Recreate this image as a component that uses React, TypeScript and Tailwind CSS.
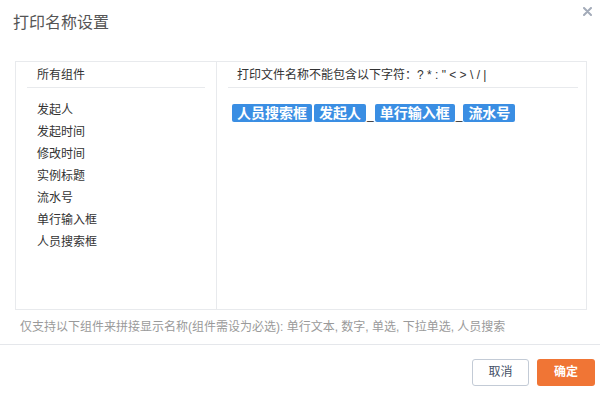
export default function App() {
  const fields = ["发起人", "发起时间", "修改时间", "实例标题", "流水号", "单行输入框", "人员搜索框"];
  const tags = ["人员搜索框", "发起人", "_", "单行输入框", "_", "流水号"];

  return (
    <div
      className="relative w-[600px] h-[399px] bg-white overflow-hidden"
      style={{ fontFamily: '"Liberation Sans", "Noto Sans CJK SC", sans-serif' }}
    >
      {/* CLOSE */}
      <button className="absolute right-[6px] top-[4px] w-[14px] h-[14px] flex items-center justify-center">
        <svg width="9" height="9" viewBox="0 0 9 9">
          <path d="M1 1 L8 8 M8 1 L1 8" stroke="#a3abb9" strokeWidth="2" strokeLinecap="round" />
        </svg>
      </button>

      {/* TITLE */}
      <div className="h-[46px] flex items-center px-[13px] text-[16px] text-[#555]">打印名称设置</div>

      {/* BOX */}
      <div className="mt-[15px] mx-[15px] w-[572px] h-[249px] border border-[#e8eaed] flex">
        <div className="w-[201px] border-r border-[#e8eaed]">
          <div className="mx-[11px] h-[26px] flex items-center pl-[10px] border-b border-[#e8eaed] text-[12px] text-[#333]">
            所有组件
          </div>
          <div className="pt-[11px] pl-[21px]">
            {fields.map((f) => (
              <div key={f} className="h-[22px] flex items-center text-[12px] text-[#333]">
                {f}
              </div>
            ))}
          </div>
        </div>
        <div className="flex-1">
          <div className="ml-[11px] mr-[8px] h-[26px] flex items-center pl-[9px] border-b border-[#e8eaed] text-[12px] text-[#333]">
            打印文件名称不能包含以下字符：? * : " &lt; &gt; \ / |
          </div>
          <div className="mt-[16px] ml-[15px] flex items-end gap-[2px]">
            {tags.map((t, i) =>
              t === "_" ? (
                <span key={i} className="mx-[-1px] text-[12px] leading-[14px] text-[#333]">_</span>
              ) : (
                <span
                  key={i}
                  className="h-[18px] px-[5px] flex items-center rounded-[2px] bg-[#3a8ee3] text-white text-[14px] font-bold"
                >
                  {t}
                </span>
              )
            )}
          </div>
        </div>
      </div>

      {/* NOTE */}
      <div className="h-[34px] flex items-center pl-[20px] text-[12px] text-[#9a9a9a]">
        仅支持以下组件来拼接显示名称(组件需设为必选): 单行文本, 数字, 单选, 下拉单选, 人员搜索
      </div>

      {/* FOOTER */}
      <div className="border-t border-[#e5e7eb] h-[55px] flex items-center justify-end gap-[8px] pr-[5px]">
        <button className="w-[57px] h-[27px] rounded-[3px] border border-[#c3cbd6] bg-white text-[12px] text-[#445066]">
          取消
        </button>
        <button className="w-[58px] h-[27px] rounded-[3px] bg-[#f07535] text-white text-[12px] font-bold">
          确定
        </button>
      </div>
    </div>
  );
}
